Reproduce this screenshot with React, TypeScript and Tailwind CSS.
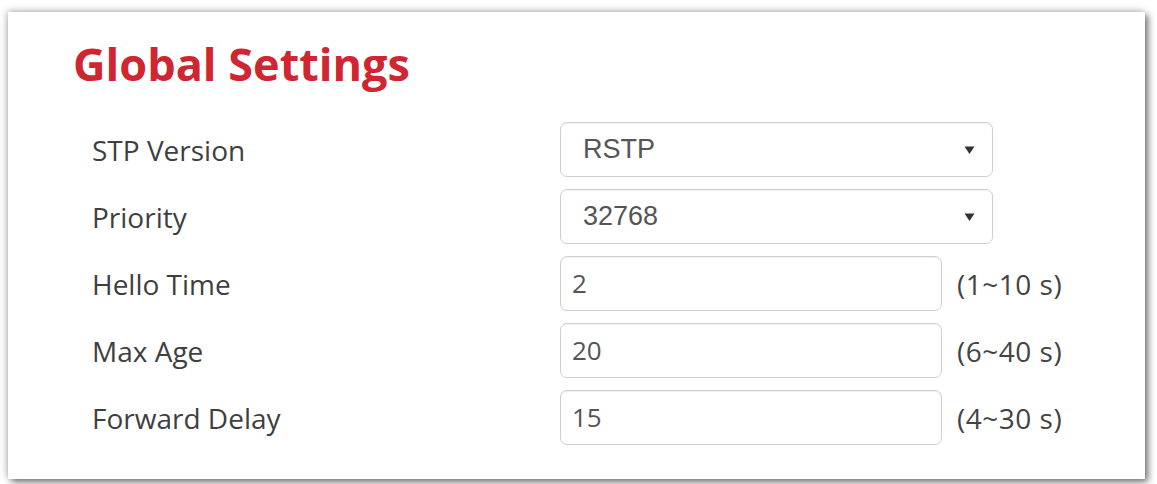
import React from "react";

const segoe = { fontFamily: '"Open Sans", "Noto Sans", sans-serif' };
const arial = { fontFamily: '"Liberation Sans", Arial, sans-serif' };

function Caret() {
  return (
    <svg width="11" height="10" viewBox="0 0 11 10" className="shrink-0">
      <path d="M0.5 1.5 L10.5 1.5 L5.5 9 Z" fill="#333" />
    </svg>
  );
}

function SelectBox({ value }: { value: string }) {
  return (
    <div className="flex h-[55px] w-[433px] items-center justify-between rounded-[7px] border border-[#cfcfcf] bg-white pl-[22px] pr-[17px] shadow-[inset_0_1px_1px_rgba(0,0,0,0.06)]">
      <span className="text-[27px] text-[#555]" style={arial}>
        {value}
      </span>
      <Caret />
    </div>
  );
}

function TextBox({ value, range }: { value: string; range: string }) {
  return (
    <div className="flex items-center">
      <div className="flex h-[55px] w-[382px] items-center rounded-[7px] border border-[#cfcfcf] bg-white pl-[11px] shadow-[inset_0_1px_1px_rgba(0,0,0,0.06)]">
        <span className="text-[26px] text-[#555]" style={segoe}>
          {value}
        </span>
      </div>
      <span className="ml-[15px] text-[28px] tracking-[0.5px] text-[#444]" style={segoe}>
        {range}
      </span>
    </div>
  );
}

const rows: { label: string; kind: "select" | "input"; value: string; range?: string }[] = [
  { label: "STP Version", kind: "select", value: "RSTP" },
  { label: "Priority", kind: "select", value: "32768" },
  { label: "Hello Time", kind: "input", value: "2", range: "(1~10 s)" },
  { label: "Max Age", kind: "input", value: "20", range: "(6~40 s)" },
  { label: "Forward Delay", kind: "input", value: "15", range: "(4~30 s)" },
];

export default function App() {
  return (
    <div className="h-[484px] w-[1157px] overflow-hidden bg-white pl-[8px] pt-[12px]">
      <div className="h-[467px] w-[1137px] bg-white shadow-[3px_3px_7px_rgba(0,0,0,0.55),-2px_-2px_7px_rgba(0,0,0,0.18)]">
        <h1 className="pl-[65px] pt-[26px] text-[45px] font-bold leading-[52px] text-[#cf2631]" style={segoe}>
          Global Settings
        </h1>
        <div className="mt-[32px] flex flex-col gap-[12px] pl-[84px]">
          {rows.map((r) => (
            <div key={r.label} className="flex h-[55px] items-center">
              <div className="w-[468px] text-[28px] text-[#3f3f3f]" style={segoe}>
                {r.label}
              </div>
              {r.kind === "select" ? (
                <SelectBox value={r.value} />
              ) : (
                <TextBox value={r.value} range={r.range ?? ""} />
              )}
            </div>
          ))}
        </div>
      </div>
    </div>
  );
}
